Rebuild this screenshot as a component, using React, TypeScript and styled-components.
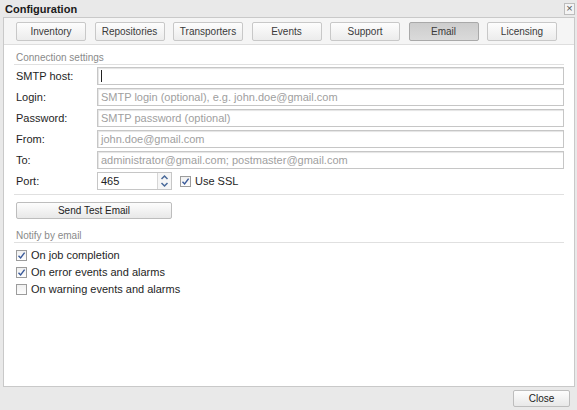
import React from 'react';
import styled, { createGlobalStyle } from 'styled-components';

const GlobalStyle = createGlobalStyle`
  html, body {
    margin: 0;
    padding: 0;
    background: #e9e9e9;
  }
  body {
    font-family: "Liberation Sans", Arial, sans-serif;
    font-size: 11px;
    color: #222;
  }
`;

const tabs = ['Inventory', 'Repositories', 'Transporters', 'Events', 'Support', 'Email', 'Licensing'];

const fields = [
  { label: 'SMTP host:', placeholder: '', caret: true },
  { label: 'Login:', placeholder: 'SMTP login (optional), e.g. john.doe@gmail.com' },
  { label: 'Password:', placeholder: 'SMTP password (optional)' },
  { label: 'From:', placeholder: 'john.doe@gmail.com' },
  { label: 'To:', placeholder: 'administrator@gmail.com; postmaster@gmail.com' },
];

const notifications = [
  { text: 'On job completion', checked: true },
  { text: 'On error events and alarms', checked: true },
  { text: 'On warning events and alarms', checked: false },
];

const Check = ({ checked }: { checked: boolean }) => (
  <CheckBox>
    {checked && (
      <svg width="9" height="9" viewBox="0 0 9 9">
        <path d="M1.5 4.8 L3.6 7 L7.6 1.6" fill="none" stroke="#3a5a9a" strokeWidth="1.4" />
      </svg>
    )}
  </CheckBox>
);

const App = () => {
  return (
    <>
      <GlobalStyle />
      <Dialog>
        <TitleBar>
          <Title>Configuration</Title>
          <CloseX>×</CloseX>
        </TitleBar>
        <Panel>
          <TabStrip>
            {tabs.map((t) => (
              <TabButton key={t} active={t === 'Email'}>{t}</TabButton>
            ))}
          </TabStrip>
          <Content>
            <GroupTitle>Connection settings</GroupTitle>
            <Rows>
              {fields.map((f) => (
                <Row key={f.label}>
                  <Label>{f.label}</Label>
                  <TextBox>
                    {f.caret ? <Caret /> : <Placeholder>{f.placeholder}</Placeholder>}
                  </TextBox>
                </Row>
              ))}
              <Row>
                <Label>Port:</Label>
                <PortBox>
                  <PortValue>465</PortValue>
                  <Spinner>
                    <svg width="9" height="14" viewBox="0 0 9 14">
                      <path d="M1.5 5 L4.5 2 L7.5 5" fill="none" stroke="#4a6a9a" strokeWidth="1.5" />
                      <path d="M1.5 9 L4.5 12 L7.5 9" fill="none" stroke="#4a6a9a" strokeWidth="1.5" />
                    </svg>
                  </Spinner>
                </PortBox>
                <CheckLabel>
                  <Check checked />
                  <span>Use SSL</span>
                </CheckLabel>
              </Row>
            </Rows>
            <Divider />
            <PlainButton>Send Test Email</PlainButton>
            <GroupTitle second>Notify by email</GroupTitle>
            <CheckList>
              {notifications.map((n) => (
                <CheckLabel key={n.text}>
                  <Check checked={n.checked} />
                  <span>{n.text}</span>
                </CheckLabel>
              ))}
            </CheckList>
          </Content>
        </Panel>
        <Footer>
          <FooterButton>Close</FooterButton>
        </Footer>
      </Dialog>
    </>
  );
};

const Dialog = styled.div`
  width: 577px;
  height: 410px;
  display: flex;
  flex-direction: column;
  background: #e9e9e9;
  box-sizing: border-box;
`;

const TitleBar = styled.div`
  height: 17px;
  display: flex;
  align-items: center;
  justify-content: space-between;
  padding: 0 2px 0 5px;
`;

const Title = styled.div`
  font-weight: bold;
  font-size: 11px;
  color: #1a1a1a;
`;

const CloseX = styled.div`
  width: 9px;
  height: 10px;
  border: 1px solid #bdbdbd;
  background: #f4f4f4;
  font-size: 11px;
  line-height: 9px;
  text-align: center;
  color: #555;
  margin-top: 1px;
`;

const Panel = styled.div`
  margin: 0 2px 0 3px;
  height: 368px;
  background: #fff;
  border: 1px solid #c9c9c9;
  display: flex;
  flex-direction: column;
`;

const TabStrip = styled.div`
  display: flex;
  gap: 8.5px;
  padding: 4px 12px 3px 12px;
  background: #f5f5f5;
  border-bottom: 1px solid #dedede;
`;

const TabButton = styled.div<{ active?: boolean }>`
  width: 70px;
  height: 19px;
  box-sizing: border-box;
  display: flex;
  align-items: center;
  justify-content: center;
  font-size: 10px;
  color: #3a3a3a;
  border: 1px solid ${(p) => (p.active ? '#a9a9a9' : '#c8c8c8')};
  border-radius: 2px;
  background: ${(p) =>
    p.active
      ? 'linear-gradient(#cdcdcd, #dadada)'
      : 'linear-gradient(#fdfdfd, #ececec)'};
`;

const Content = styled.div`
  padding: 0 10px 0 10px;
  display: flex;
  flex-direction: column;
`;

const GroupTitle = styled.div<{ second?: boolean }>`
  color: #8a8a8a;
  font-size: 10px;
  padding: ${(p) => (p.second ? '11px 2px 1px' : '7px 2px 1px')};
  border-bottom: 1px solid #e0e0e0;
`;

const Rows = styled.div`
  display: flex;
  flex-direction: column;
  gap: 3px;
  padding-top: 2px;
`;

const Row = styled.div`
  display: flex;
  align-items: center;
  height: 18px;
  padding-left: 2px;
`;

const Label = styled.div`
  width: 81px;
  font-size: 11px;
  color: #1e1e1e;
`;

const TextBox = styled.div`
  flex: 1;
  height: 18px;
  box-sizing: border-box;
  border: 1px solid #c6c6c6;
  box-shadow: inset 1px 1px 1px #e4e4e4;
  display: flex;
  align-items: center;
  padding-left: 3px;
`;

const Placeholder = styled.span`
  color: #a0a0a0;
  font-size: 11px;
`;

const Caret = styled.span`
  width: 1px;
  height: 12px;
  background: #222;
`;

const PortBox = styled.div`
  width: 75px;
  height: 18px;
  box-sizing: border-box;
  border: 1px solid #c6c6c6;
  display: flex;
  align-items: center;
`;

const PortValue = styled.span`
  flex: 1;
  padding-left: 3px;
  font-size: 11px;
  color: #222;
`;

const Spinner = styled.div`
  width: 13px;
  height: 16px;
  display: flex;
  align-items: center;
  justify-content: center;
  border-left: 1px solid #d6d6d6;
  background: #f6f6f6;
`;

const CheckLabel = styled.div`
  display: flex;
  align-items: center;
  gap: 4px;
  font-size: 11px;
  color: #1e1e1e;
  margin-left: 8px;
  &:first-child {
    margin-left: 0;
  }
`;

const CheckBox = styled.span`
  width: 11px;
  height: 11px;
  box-sizing: border-box;
  border: 1px solid #9c9c9c;
  background: linear-gradient(#f0f0f0, #fdfdfd);
  display: flex;
  align-items: center;
  justify-content: center;
`;

const Divider = styled.div`
  border-bottom: 1px solid #e0e0e0;
  margin-top: 4px;
`;

const PlainButton = styled.div`
  margin: 7px 0 0 2px;
  width: 156px;
  height: 17px;
  box-sizing: border-box;
  display: flex;
  align-items: center;
  justify-content: center;
  font-size: 10px;
  color: #222;
  border: 1px solid #bdbdbd;
  border-radius: 2px;
  background: linear-gradient(#fdfdfd, #e8e8e8);
`;

const CheckList = styled.div`
  display: flex;
  flex-direction: column;
  gap: 5px;
  padding: 6px 0 0 2px;
  & > div {
    margin-left: 0;
  }
`;

const Footer = styled.div`
  flex: 1;
  display: flex;
  justify-content: flex-end;
  align-items: center;
  padding-right: 7px;
`;

const FooterButton = styled.div`
  width: 57px;
  height: 17px;
  box-sizing: border-box;
  display: flex;
  align-items: center;
  justify-content: center;
  font-size: 10px;
  color: #222;
  border: 1px solid #bdbdbd;
  border-radius: 2px;
  background: linear-gradient(#fdfdfd, #e8e8e8);
`;

export default App;
